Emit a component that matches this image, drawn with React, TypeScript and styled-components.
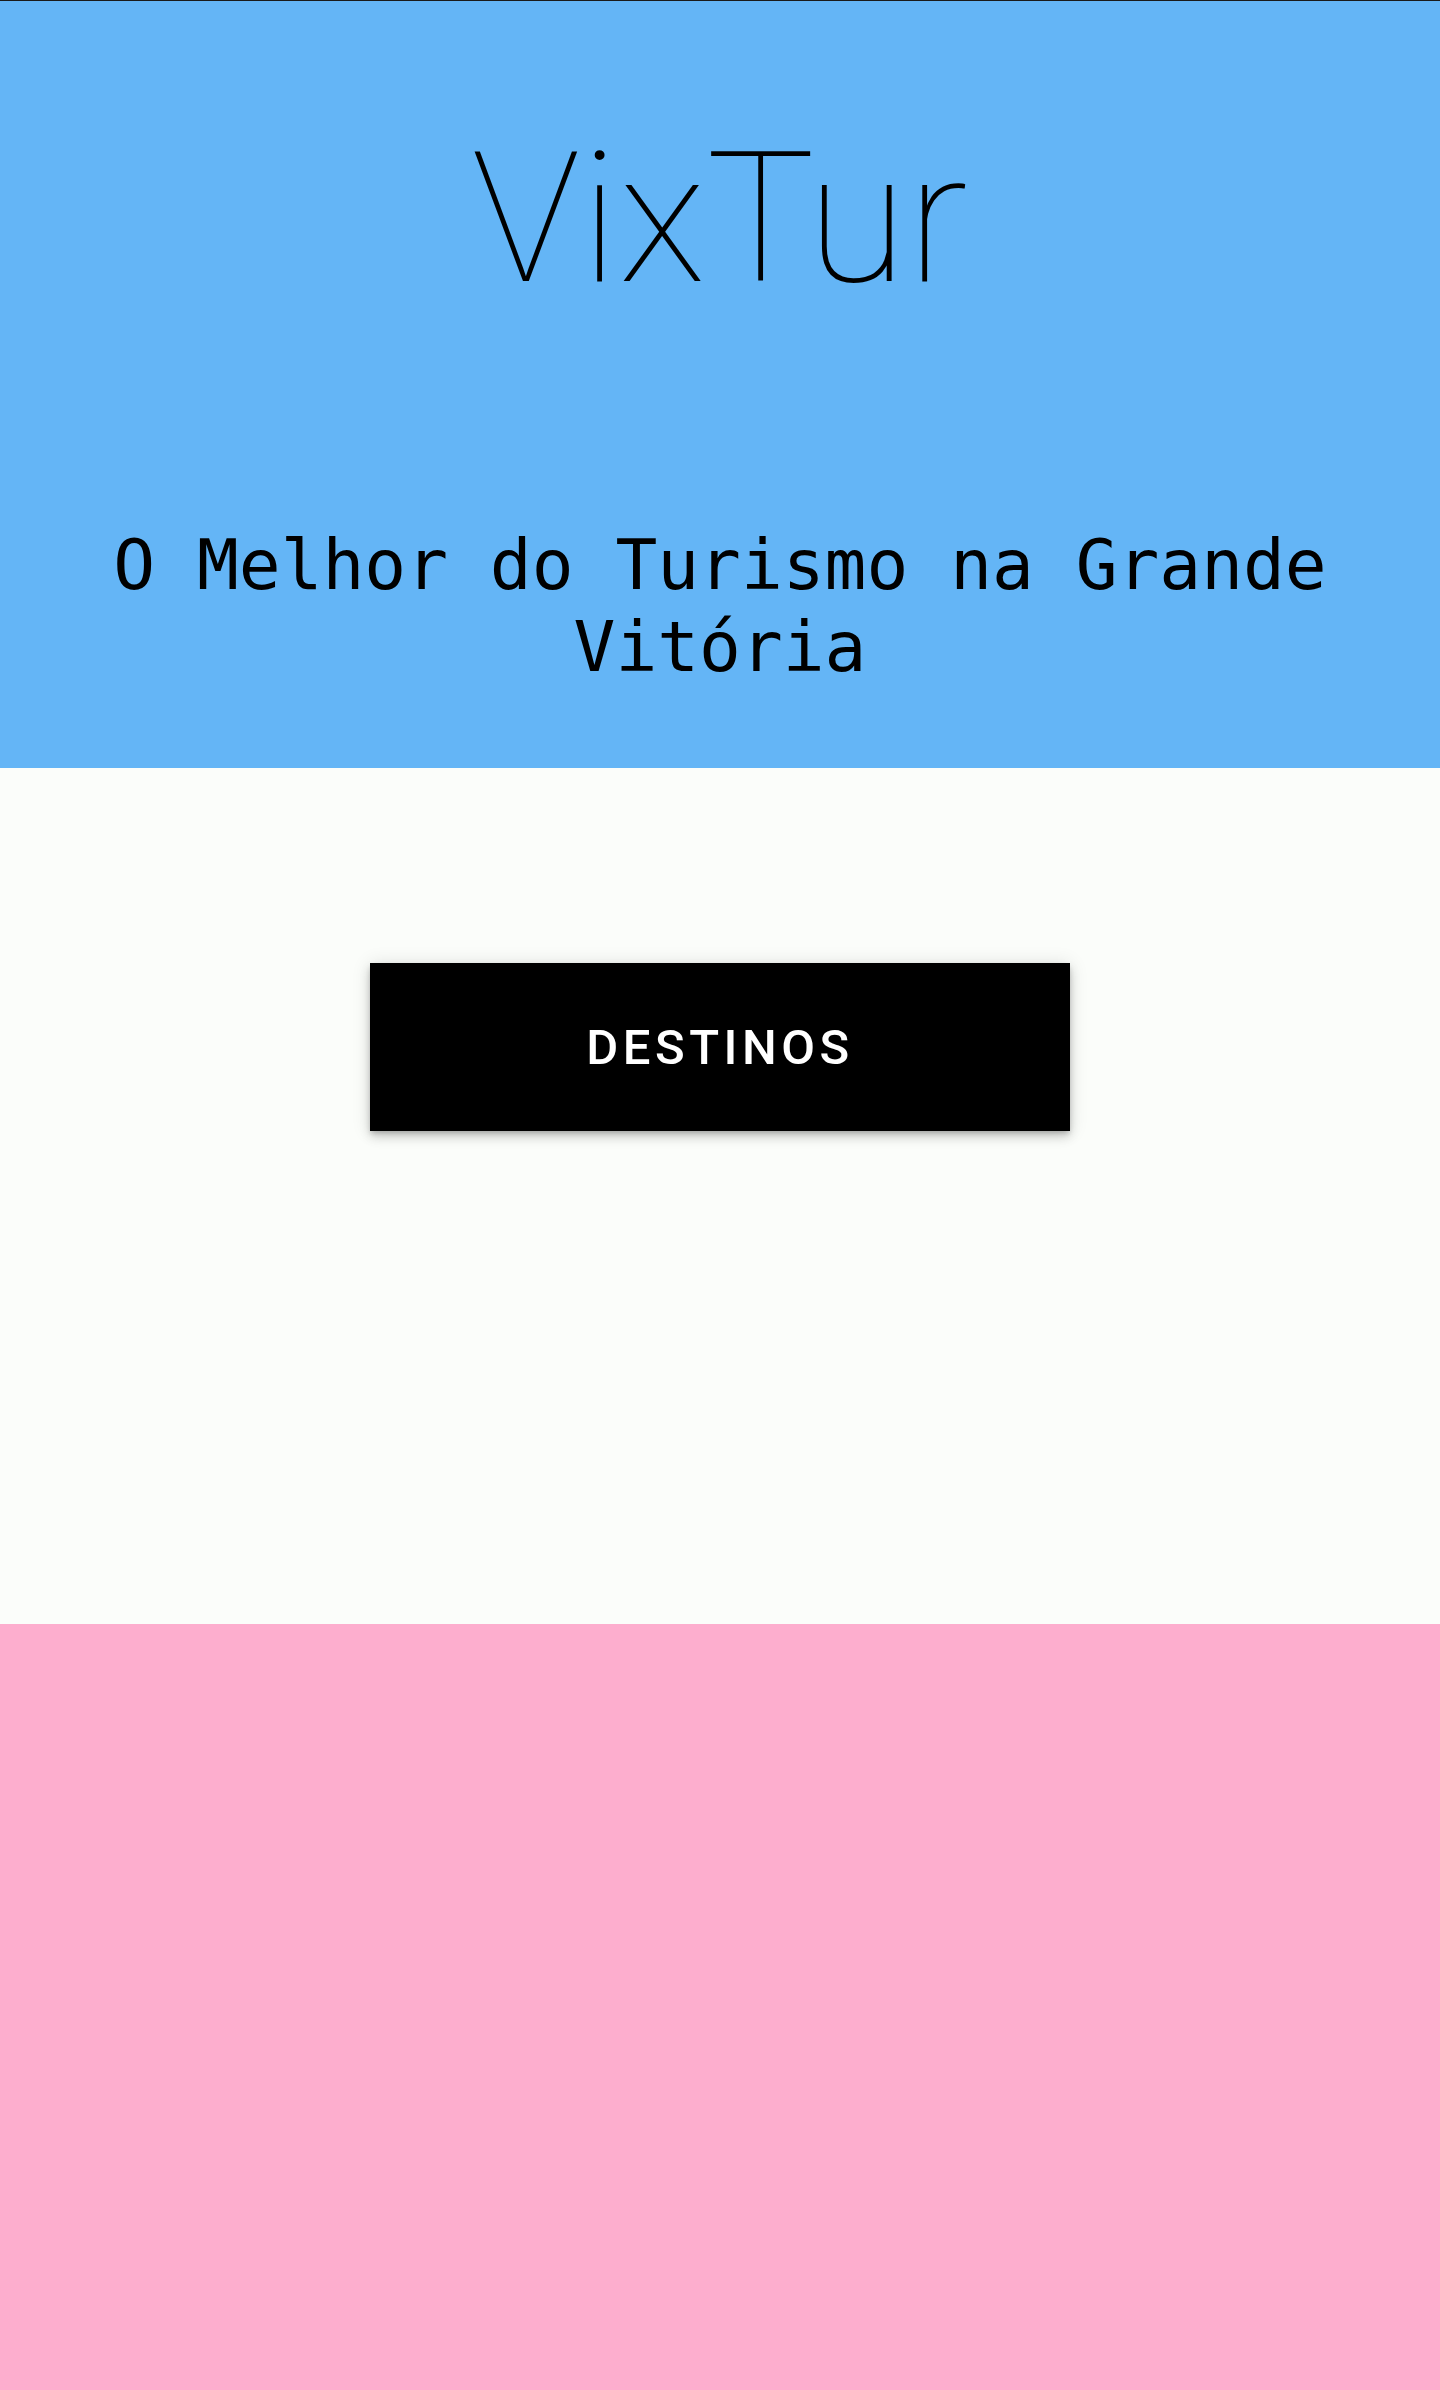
import React from "react";
import styled, { createGlobalStyle } from "styled-components";

const Global = createGlobalStyle`
  html, body { margin: 0; padding: 0; }
  body { background: #fbfdfa; font-family: Roboto, "Liberation Sans", sans-serif; }
`;

const Page = styled.div`
  display: flex;
  flex-direction: column;
  border-top: 1px solid #1a1a1a;
`;

const Hero = styled.header`
  background: #64b5f6;
  height: 767px;
  display: flex;
  flex-direction: column;
  align-items: center;
  box-sizing: border-box;
  padding-top: 111px;
`;

const Title = styled.h1`
  margin: 0;
  font-family: Roboto, "Liberation Sans", sans-serif;
  font-weight: 100;
  font-size: 182px;
  letter-spacing: 0.5px;
  line-height: normal;
  color: #000;
`;

const Subtitle = styled.h2`
  margin: 199px 0 0;
  font-family: "DejaVu Sans Mono", monospace;
  font-weight: 400;
  font-size: 69.5px;
  line-height: 82px;
  text-align: center;
  color: #000;
  max-width: 1300px;
`;

const Main = styled.main`
  background: #fbfdfa;
  height: 856px;
  display: flex;
  justify-content: center;
  align-items: flex-start;
  padding-top: 195px;
  box-sizing: border-box;
`;

const Button = styled.button`
  width: 700px;
  height: 168px;
  background: #000;
  color: #fff;
  border: none;
  font-family: Roboto, "Liberation Sans", sans-serif;
  font-weight: 500;
  font-size: 49px;
  letter-spacing: 4.5px;
  text-transform: uppercase;
  box-shadow: 0px 3px 5px -1px rgba(0,0,0,0.2), 0px 6px 10px 0px rgba(0,0,0,0.14), 0px 1px 18px 0px rgba(0,0,0,0.12);
  cursor: pointer;
`;

const Footer = styled.footer`
  background: #fdaece;
  height: 766px;
`;

export default function App() {
  return (
    <Page>
      <Global />
      <Hero>
        <Title>VixTur</Title>
        <Subtitle>O Melhor do Turismo na Grande Vitória</Subtitle>
      </Hero>
      <Main>
        <Button>Destinos</Button>
      </Main>
      <Footer />
    </Page>
  );
}
